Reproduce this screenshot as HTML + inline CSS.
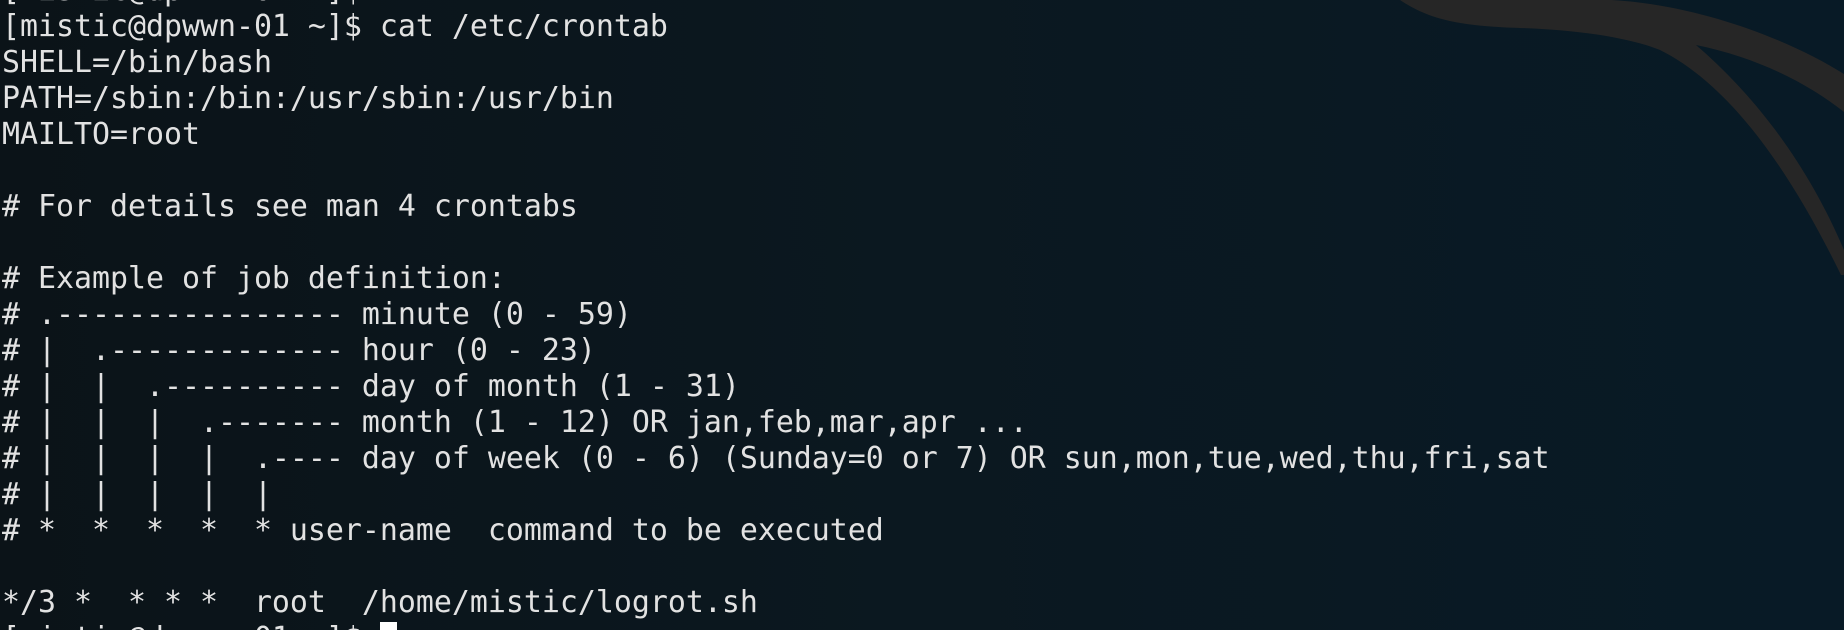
<!DOCTYPE html>
<html><head><meta charset="utf-8"><style>
html,body{margin:0;padding:0;width:1844px;height:630px;overflow:hidden;}
#wrap{position:relative;width:1844px;height:630px;overflow:hidden;background:linear-gradient(90deg,#0b1318 0%,#0b1820 50%,#081a26 100%);}
svg{position:absolute;left:0;top:0}
pre{position:absolute;left:2px;top:-27px;margin:0;font-family:"DejaVu Sans Mono","Liberation Mono",monospace;font-size:29.9px;line-height:36px;color:#e2e2e2;white-space:pre;}
.cur{display:inline-block;width:17px;height:32px;background:#fff;vertical-align:-6px}
</style></head><body><div id="wrap">
<svg width="1844" height="630" viewBox="0 0 1844 630">
<path fill="#262626" d="M1400,0 C1430,20 1460,26 1520,28 C1580,30 1630,38 1660,50 C1720,80 1780,150 1841,275 L1844,275 L1844,250 C1810,170 1760,100 1696,45 C1760,58 1810,85 1844,112 L1844,74 C1790,40 1700,5 1612,0 Z"/>
</svg>
<pre>[mistic@dpwwn-01 ~]$
[mistic@dpwwn-01 ~]$ cat /etc/crontab
SHELL=/bin/bash
PATH=/sbin:/bin:/usr/sbin:/usr/bin
MAILTO=root

# For details see man 4 crontabs

# Example of job definition:
# .---------------- minute (0 - 59)
# |  .------------- hour (0 - 23)
# |  |  .---------- day of month (1 - 31)
# |  |  |  .------- month (1 - 12) OR jan,feb,mar,apr ...
# |  |  |  |  .---- day of week (0 - 6) (Sunday=0 or 7) OR sun,mon,tue,wed,thu,fri,sat
# |  |  |  |  |
# *  *  *  *  * user-name  command to be executed

*/3 *  * * *  root  /home/mistic/logrot.sh
[mistic@dpwwn-01 ~]$ <span class="cur"></span></pre>
</div></body></html>
